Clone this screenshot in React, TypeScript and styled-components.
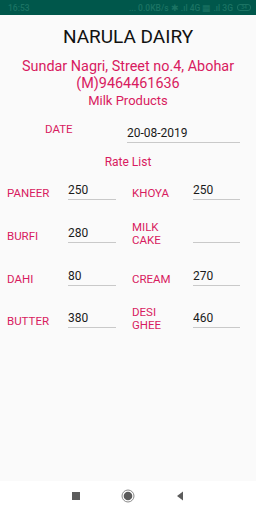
import React from 'react'
import styled, { createGlobalStyle } from 'styled-components'

const GlobalStyle = createGlobalStyle`
    html, body {
        margin: 0;
        padding: 0;
        height: 100%;
        background: #fafafa;
    }
    #root {
        height: 100%;
    }
    * {
        box-sizing: border-box;
    }
`

const ACCENT = '#d81b60'

const Screen = styled.div`
    display: flex;
    flex-direction: column;
    width: 256px;
    height: 512px;
    background: #fafafa;
    font-family: Roboto, "Liberation Sans", sans-serif;
    overflow: hidden;
`

const StatusBar = styled.div`
    height: 15px;
    flex: none;
    background: #00574b;
    display: flex;
    align-items: center;
    justify-content: space-between;
    padding: 0 5px 0 8px;
    font-size: 8.5px;
    font-weight: 500;
    color: #1b7363;
`

const StatusRight = styled.div`
    display: flex;
    align-items: center;
    gap: 4px;
`

const Battery = styled.span`
    display: inline-block;
    width: 14px;
    height: 7px;
    border: 1px solid #1b7363;
    border-radius: 3px;
    font-size: 5px;
    line-height: 5px;
    text-align: center;
`

const Content = styled.main`
    flex: 1;
    display: flex;
    flex-direction: column;
`

const Title = styled.h1`
    margin: 10.5px 0 0;
    font-size: 19px;
    line-height: 22px;
    font-weight: 400;
    color: #111;
    text-align: center;
`

const Address = styled.div`
    margin-top: 10px;
    font-size: 14.4px;
    line-height: 17px;
    color: ${ACCENT};
    text-align: center;
`

const Subtitle = styled.div<{ $top: number }>`
    margin-top: ${p => p.$top}px;
    font-size: ${p => (p.$top > 5 ? 12 : 13)}px;
    line-height: 15px;
    color: ${ACCENT};
    text-align: center;
`

const DateRow = styled.div`
    display: flex;
    align-items: flex-end;
    margin-top: 15px;
    padding-left: 45px;
`

const Label = styled.div<{ $twoLine?: boolean }>`
    font-size: 11.5px;
    line-height: 13px;
    color: ${ACCENT};
    margin-bottom: ${p => (p.$twoLine ? -4 : 0)}px;
`

const DateLabel = styled(Label)`
    width: 82px;
    margin-bottom: 7px;
`

const Field = styled.div<{ $width: number }>`
    width: ${p => p.$width}px;
    height: 17px;
    font-size: 12px;
    line-height: 14px;
    padding-bottom: 2px;
    color: #1a1a1a;
    border-bottom: 1px solid #c9c9c9;
`

const RateGrid = styled.div`
    display: grid;
    grid-template-columns: 109px 108px;
    grid-auto-rows: 30px;
    column-gap: 16px;
    row-gap: 12.6px;
    margin-top: 0;
    padding-left: 7px;
`

const Cell = styled.div`
    display: flex;
    align-items: flex-end;
`

const CellLabel = styled(Label)`
    width: 61px;
    flex: none;
`

const NavBar = styled.nav`
    height: 31px;
    flex: none;
    background: #ffffff;
    display: flex;
    align-items: center;
    justify-content: center;
    gap: 41px;
    padding-bottom: 1px;
`

const NavSquare = styled.span`
    width: 8px;
    height: 8px;
    background: #5c5c5c;
`

const items: [string, string, boolean][] = [
    ['PANEER', '250', false],
    ['KHOYA', '250', false],
    ['BURFI', '280', false],
    ['MILK\nCAKE', '', true],
    ['DAHI', '80', false],
    ['CREAM', '270', false],
    ['BUTTER', '380', false],
    ['DESI\nGHEE', '460', true],
]

const App = () => (
    <>
        <GlobalStyle />
        <Screen>
            <StatusBar>
                <span>16:53</span>
                <StatusRight>
                    <span>... 0.0KB/s ✱ .ıl 4G ▦ .ıl 3G</span>
                    <Battery>34</Battery>
                </StatusRight>
            </StatusBar>
            <Content>
                <Title>NARULA DAIRY</Title>
                <Address>
                    Sundar Nagri, Street no.4, Abohar
                    <br />
                    (M)9464461636
                </Address>
                <Subtitle $top={1.4}>Milk Products</Subtitle>
                <DateRow>
                    <DateLabel>DATE</DateLabel>
                    <Field $width={113}>20-08-2019</Field>
                </DateRow>
                <Subtitle $top={12.5}>Rate List</Subtitle>
                <RateGrid>
                    {items.map(([label, value, twoLine], i) => (
                        <Cell key={label}>
                            <CellLabel $twoLine={twoLine}>
                                {label.split('\n').map(line => (
                                    <div key={line}>{line}</div>
                                ))}
                            </CellLabel>
                            <Field $width={i % 2 === 0 ? 48 : 47}>{value}</Field>
                        </Cell>
                    ))}
                </RateGrid>
            </Content>
            <NavBar>
                <NavSquare />
                <svg width="14" height="14" viewBox="0 0 14 14">
                    <circle cx="7" cy="7" r="6" fill="none" stroke="#8a8a8a" strokeWidth="1" />
                    <circle cx="7" cy="7" r="4.3" fill="#5c5c5c" />
                </svg>
                <svg width="8" height="10" viewBox="0 0 8 10">
                    <polygon points="1,5 7,0.5 7,9.5" fill="#5c5c5c" />
                </svg>
            </NavBar>
        </Screen>
    </>
)

export default App
